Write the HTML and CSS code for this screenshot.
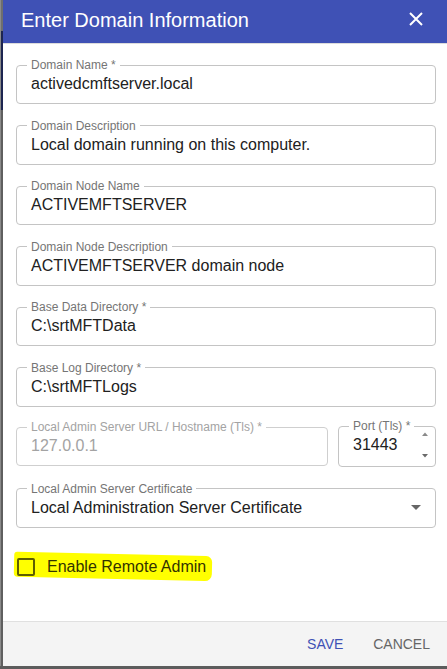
FILE: index.html
```html
<!DOCTYPE html>
<html lang="en">
<head>
<meta charset="utf-8">
<title>Enter Domain Information</title>
<link rel="stylesheet" href="styles.css">
</head>
<body>
<div class="screen">
  <div class="main">
    <div class="edge"></div>
    <div class="dialog">
      <header class="title-bar">
        <h2 class="title">Enter Domain Information</h2>
        <button class="close" aria-label="Close">
          <svg width="14" height="14" viewBox="0 0 14 14"><path d="M1 1L13 13M13 1L1 13" stroke="#fff" stroke-width="2" fill="none"/></svg>
        </button>
      </header>
      <div class="content">
        <fieldset class="field"><legend>Domain Name *</legend><div class="value">activedcmftserver.local</div></fieldset>
        <fieldset class="field"><legend>Domain Description</legend><div class="value">Local domain running on this computer.</div></fieldset>
        <fieldset class="field"><legend>Domain Node Name</legend><div class="value">ACTIVEMFTSERVER</div></fieldset>
        <fieldset class="field"><legend>Domain Node Description</legend><div class="value">ACTIVEMFTSERVER domain node</div></fieldset>
        <fieldset class="field"><legend>Base Data Directory *</legend><div class="value">C:\srtMFTData</div></fieldset>
        <fieldset class="field"><legend>Base Log Directory *</legend><div class="value">C:\srtMFTLogs</div></fieldset>
        <div class="row">
          <fieldset class="field disabled url"><legend>Local Admin Server URL / Hostname (Tls) *</legend><div class="value">127.0.0.1</div></fieldset>
          <fieldset class="field port"><legend>Port (Tls) *</legend>
            <div class="value-wrap">
              <div class="value">31443</div>
              <svg class="spinner" width="8" height="30" viewBox="0 0 8 30"><path d="M1 7L4 3.5L7 7Z" fill="#8a8a8a"/><path d="M1 25L4 28.5L7 25Z" fill="#6a6a6a"/></svg>
            </div>
          </fieldset>
        </div>
        <fieldset class="field select"><legend>Local Admin Server Certificate</legend>
          <div class="value-wrap">
            <div class="value">Local Administration Server Certificate</div>
            <svg class="arrow" width="10" height="5" viewBox="0 0 10 5"><path d="M0 0L5 5L10 0Z" fill="#666"/></svg>
          </div>
        </fieldset>
        <label class="check">
          <span class="box"></span>
          <span class="check-text">Enable Remote Admin</span>
        </label>
      </div>
      <footer class="actions">
        <button class="btn primary">SAVE</button>
        <button class="btn">CANCEL</button>
      </footer>
    </div>
  </div>
  <div class="bottom-edge"></div>
</div>
</body>
</html>
```
FILE: styles.css
```css
html, body {
  margin: 0;
  padding: 0;
  height: 100%;
}
body {
  font-family: "Liberation Sans", Arial, sans-serif;
  background: #fff;
  overflow: hidden;
}
.screen {
  display: flex;
  flex-direction: column;
  height: 669px;
}
.main {
  flex: 1;
  display: flex;
  min-height: 0;
}
.edge {
  width: 3px;
  flex: none;
  background:
    linear-gradient(to right, #8a8a8a 0 1px, transparent 1px),
    linear-gradient(to bottom, #6e6e6e 0 31px, #1d2550 31px 110px, #5f5f5f 110px);
}
.bottom-edge {
  height: 3px;
  background: #5c5c5c;
}
.dialog {
  flex: 1;
  display: flex;
  flex-direction: column;
  min-width: 0;
}
.title-bar {
  height: 43px;
  background: #3f51b5;
  border-bottom: 1px solid #dcdcdc;
  display: flex;
  align-items: flex-start;
  justify-content: space-between;
  padding: 0 24px 0 18px;
  box-sizing: content-box;
}
.title {
  margin: 8px 0 0;
  font-size: 20px;
  line-height: 24px;
  font-weight: 400;
  color: #fff;
}
.close {
  margin-top: 12px;
  padding: 0;
  border: 0;
  background: none;
  width: 14px;
  height: 14px;
  display: block;
}
.close svg { display: block; }
.content {
  flex: 1;
  display: flex;
  flex-direction: column;
  gap: 15.5px;
  padding: 15px 11px 0 13px;
}
.field {
  margin: 0;
  padding: 3px 14px 10px;
  border: 1px solid #c4c4c4;
  border-radius: 4px;
  min-width: 0;
}
.field legend {
  margin-left: -4px;
  padding: 0 4px;
  font-size: 12px;
  line-height: 12px;
  color: #757575;
}
.value {
  font-size: 16px;
  line-height: 19px;
  height: 19px;
  color: #212121;
  white-space: nowrap;
}
.row {
  display: flex;
  gap: 10px;
  align-items: center;
  margin-top: -2px;
}
.url { flex: 1; }
.disabled { border-color: #cfcfcf; }
.disabled legend, .disabled .value { color: #a3a3a3; }
.port {
  width: 98px;
  flex: none;
  box-sizing: border-box;
  padding: 3px 10px 12px 14px;
}
.value-wrap {
  display: flex;
  align-items: center;
  justify-content: space-between;
}
.port .value-wrap { height: 19px; }
.spinner { margin-top: -1px; margin-right: -4px; }
.select .arrow { margin-right: 0; margin-top: 1px; }
.check {
  position: relative;
  display: flex;
  align-items: center;
  gap: 12px;
  margin-top: 14px;
  padding-left: 1px;
  width: max-content;
}
.check::before {
  content: "";
  position: absolute;
  left: -2px;
  top: -3px;
  width: 198px;
  height: 25px;
  background: #ffff00;
  border-radius: 3px 6px 7px 4px;
  transform: rotate(1.3deg);
  z-index: 0;
}
.box {
  position: relative;
  width: 14px;
  height: 14px;
  border: 2px solid #5e5e00;
  border-radius: 2px;
  box-sizing: content-box;
}
.check-text {
  position: relative;
  font-size: 16px;
  line-height: 19px;
  color: #333300;
}
.actions {
  height: 44px;
  border-top: 1px solid #e0e0e0;
  background: #f4f4f4;
  display: flex;
  justify-content: flex-end;
  align-items: center;
  padding: 0 9px 0 8px;
}
.btn {
  font-family: "Liberation Sans", Arial, sans-serif;
  font-size: 14px;
  line-height: 18px;
  min-width: 64px;
  padding: 6px 8px;
  margin-left: 8px;
  border: 0;
  background: none;
  color: #666;
}
.btn.primary { color: #3f51b5; }
```
